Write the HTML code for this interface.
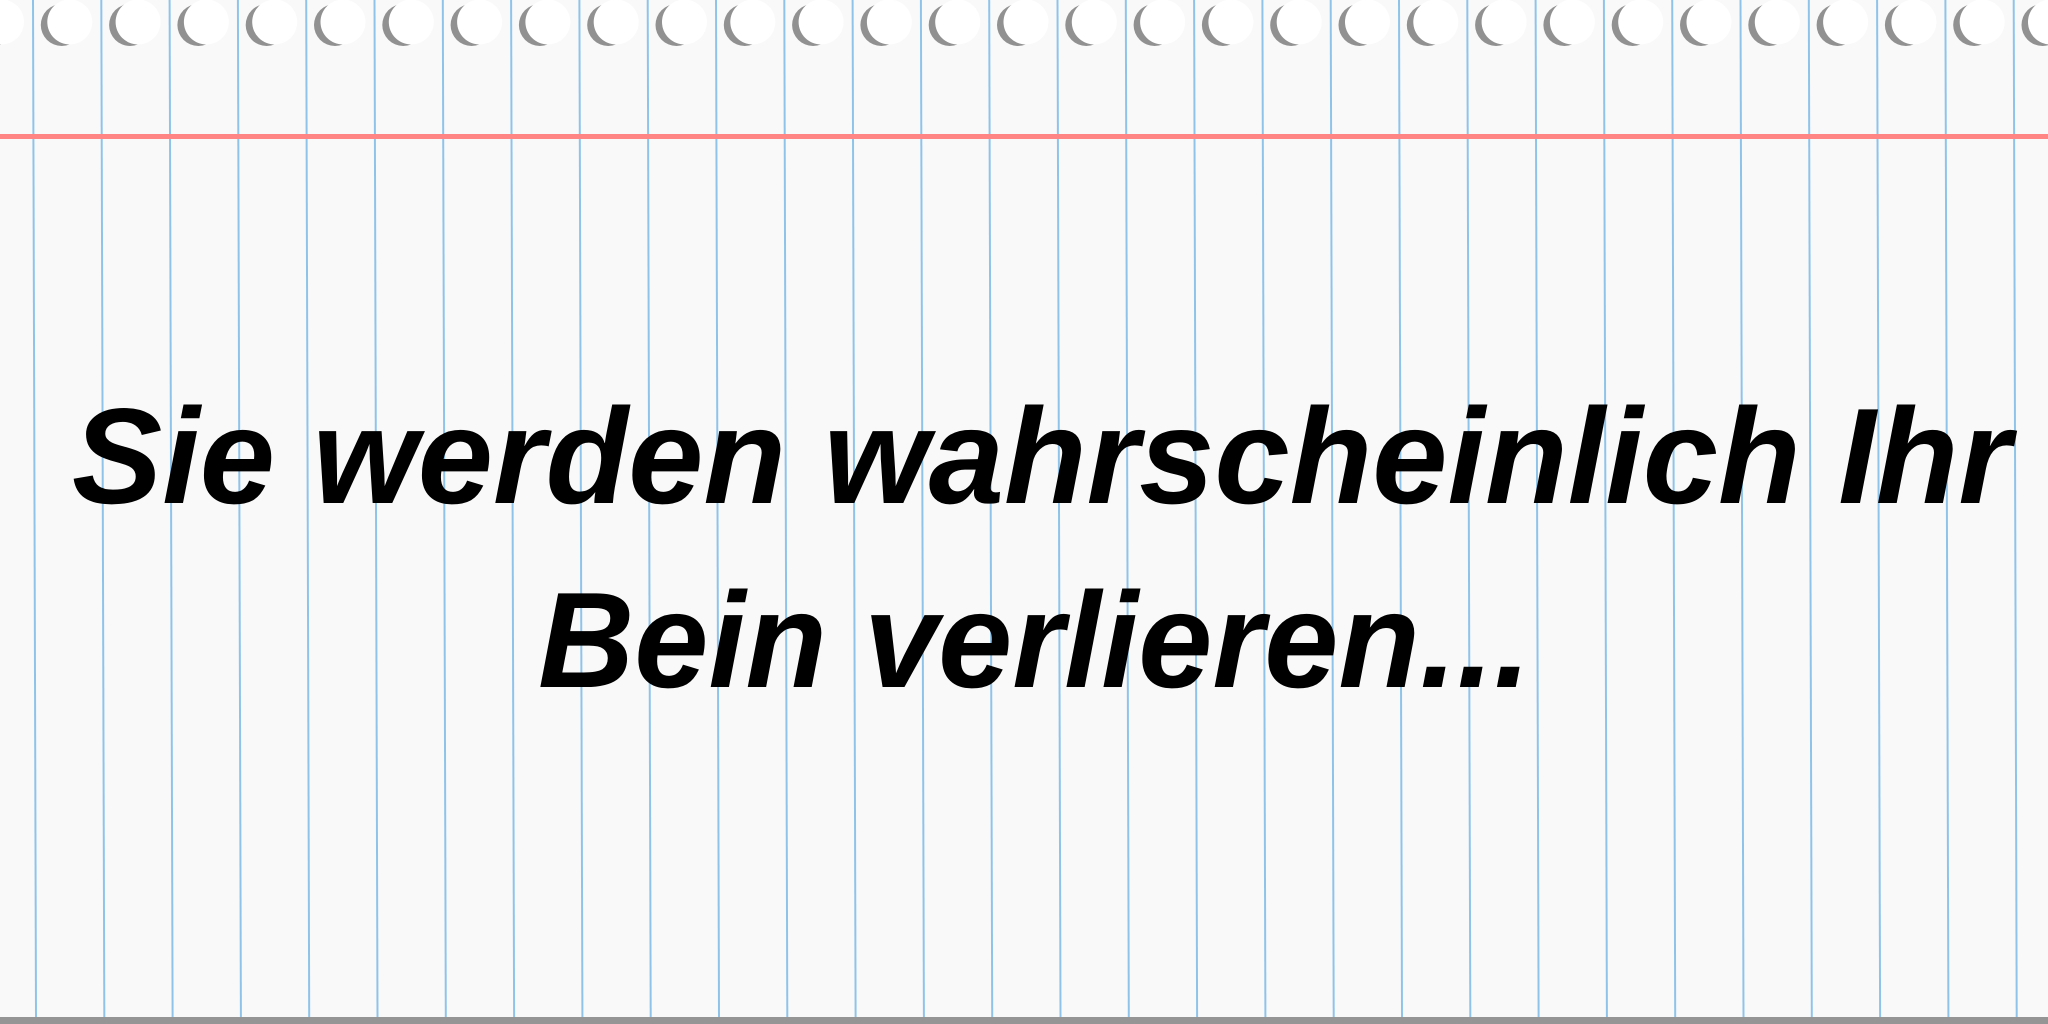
<!DOCTYPE html>
<html><head><meta charset="utf-8"><style>
html,body{margin:0;padding:0;background:#f9f9f9;}
svg{display:block}
</style></head><body>
<svg width="2048" height="1024" viewBox="0 0 2048 1024" xmlns="http://www.w3.org/2000/svg">
<rect width="2048" height="1024" fill="#f9f9f9"/>
<g id="lines" stroke="#8fc4ea" stroke-width="2"></g>
<g id="holes"></g>
<rect x="0" y="134" width="2048" height="5" fill="#ff8585"/>
<rect x="0" y="1017" width="2048" height="7" fill="#959595"/>
<g font-family="'Liberation Sans', sans-serif" font-weight="bold" font-style="italic" font-size="136" fill="#000">
<text x="72" y="503" textLength="1939" lengthAdjust="spacingAndGlyphs">Sie werden wahrscheinlich Ihr</text>
<text x="538" y="687" textLength="993" lengthAdjust="spacingAndGlyphs">Bein verlieren...</text>
</g>
</svg>
<script>
var ns="http://www.w3.org/2000/svg";
var L=document.getElementById('lines'),H=document.getElementById('holes');
for(var i=0;i<30;i++){
 var x=33+68.3*i;
 var l=document.createElementNS(ns,'line');
 l.setAttribute('x1',x);l.setAttribute('y1',0);l.setAttribute('x2',x+3);l.setAttribute('y2',1017);
 L.appendChild(l);
}
for(var i=0;i<31;i++){
 var cx=1.5+68.3*i;
 var g=document.createElementNS(ns,'circle');
 g.setAttribute('cx',cx-8);g.setAttribute('cy',25);g.setAttribute('r',21);g.setAttribute('fill','#919191');
 H.appendChild(g);
 var w=document.createElementNS(ns,'circle');
 w.setAttribute('cx',cx);w.setAttribute('cy',22);w.setAttribute('r',22.5);w.setAttribute('fill','#ffffff');
 H.appendChild(w);
}
</script>
</body></html>
